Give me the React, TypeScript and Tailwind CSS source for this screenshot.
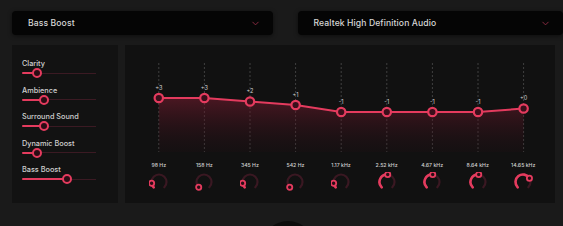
import { ChevronDown } from 'lucide-react';

const PINK = '#e43b5e';

const sliders = [
  { label: 'Clarity', value: 0.2 },
  { label: 'Ambience', value: 0.3 },
  { label: 'Surround Sound', value: 0.3 },
  { label: 'Dynamic Boost', value: 0.2 },
  { label: 'Bass Boost', value: 0.61 },
];

const bands = [
  { freq: '98 Hz', gain: 3, knob: 0.13 },
  { freq: '158 Hz', gain: 3, knob: 0 },
  { freq: '345 Hz', gain: 2, knob: 0.13 },
  { freq: '542 Hz', gain: 1, knob: 0 },
  { freq: '1.17 kHz', gain: -1, knob: 0.13 },
  { freq: '2.52 kHz', gain: -1, knob: 0.52 },
  { freq: '4.67 kHz', gain: -1, knob: 0.52 },
  { freq: '8.64 kHz', gain: -1, knob: 0.52 },
  { freq: '14.65 kHz', gain: 0, knob: 0.72 },
];

const COL = 45.6;
const gainY = (g: number) => 63.5 - g * 3.5;
const fmt = (g: number) => (g < 0 ? `${g}` : `+${g}`);

function polar(cx: number, cy: number, r: number, deg: number) {
  const a = (deg * Math.PI) / 180;
  return [cx + r * Math.sin(a), cy - r * Math.cos(a)];
}

function arc(cx: number, cy: number, r: number, from: number, to: number) {
  const [x1, y1] = polar(cx, cy, r, from);
  const [x2, y2] = polar(cx, cy, r, to);
  const large = to - from > 180 ? 1 : 0;
  return `M ${x1} ${y1} A ${r} ${r} 0 ${large} 1 ${x2} ${y2}`;
}

function Dropdown({ label, className }: { label: string; className: string }) {
  return (
    <div
      className={`h-[24px] rounded-[4px] bg-[#050505] flex items-center justify-between pl-[16px] pr-[12px] shadow-[0_1px_4px_rgba(0,0,0,0.5)] ${className}`}
    >
      <span className="text-[8.6px] font-medium text-[#d6d6d6] tracking-[0.1px]">{label}</span>
      <ChevronDown size={11} strokeWidth={2} color="#8f2c44" />
    </div>
  );
}

function Slider({ label, value }: { label: string; value: number }) {
  return (
    <div className="flex flex-col">
      <span className="h-[10px] leading-[10px] text-[7.3px] font-medium text-[#cfcfcf]">{label}</span>
      <div className="relative h-[8px] w-[74px]">
        <div className="absolute left-0 right-0 top-[3.5px] h-[1px] bg-[#3b1a23]" />
        <div
          className="absolute left-0 top-[3px] h-[2px] rounded-full"
          style={{ width: `${value * 74}px`, backgroundColor: PINK }}
        />
        <div
          className="absolute top-[-1px] h-[10px] w-[10px] rounded-full border-[2px] bg-[#2a0c14]"
          style={{ left: `${value * 74 - 5}px`, borderColor: PINK }}
        />
      </div>
    </div>
  );
}

function Knob({ value }: { value: number }) {
  const start = -135;
  const end = start + 270 * value;
  const [tx, ty] = polar(10, 10, 7.5, end);
  return (
    <svg width="20" height="20" viewBox="0 0 20 20">
      <path d={arc(10, 10, 7.5, start, 135)} fill="none" stroke="#3a1822" strokeWidth="2.2" strokeLinecap="round" />
      {value > 0 && (
        <path d={arc(10, 10, 7.5, start, end)} fill="none" stroke={PINK} strokeWidth="2.6" strokeLinecap="round" />
      )}
      <circle cx={tx} cy={ty} r="2.6" fill="#2a0c14" stroke={PINK} strokeWidth="1.8" />
    </svg>
  );
}

function Chart() {
  const pts = bands.map((b, i) => [COL / 2 + i * COL, gainY(b.gain)]);
  const line = pts.map(([x, y], i) => `${i ? 'L' : 'M'} ${x} ${y}`).join(' ');
  const area = `${line} L ${pts[pts.length - 1][0]} 107 L ${pts[0][0]} 107 Z`;
  return (
    <svg width="410" height="110" viewBox="0 0 410 110" className="block">
      <defs>
        <linearGradient id="eqfill" x1="0" y1="0" x2="0" y2="1">
          <stop offset="0" stopColor="#7a1c30" stopOpacity="0.55" />
          <stop offset="1" stopColor="#2a0d15" stopOpacity="0.15" />
        </linearGradient>
      </defs>
      {pts.map(([x], i) => (
        <line key={i} x1={x} y1="18" x2={x} y2="107" stroke="#4d4d4d" strokeWidth="0.8" strokeDasharray="2 2" />
      ))}
      <path d={area} fill="url(#eqfill)" />
      <path d={line} fill="none" stroke={PINK} strokeWidth="2" strokeLinejoin="round" />
      {pts.map(([x, y], i) => (
        <g key={i}>
          <circle cx={x} cy={y} r="4.2" fill="#3a0f1b" stroke={PINK} strokeWidth="2.2" />
          <text
            x={x}
            y={y - 8.5}
            textAnchor="middle"
            fontSize="5.6"
            fill="#d0d0d0"
            fontFamily="Inter, sans-serif"
          >
            {fmt(bands[i].gain)}
          </text>
        </g>
      ))}
    </svg>
  );
}

export default function App() {
  return (
    <div className="relative w-[563px] h-[226px] overflow-hidden bg-[#1a1a1a] font-['Inter','Noto_Sans',sans-serif]">
      <div className="flex pt-[11px] pl-[12px]">
        <Dropdown label="Bass Boost" className="w-[263px]" />
        <Dropdown label="Realtek High Definition Audio" className="ml-[25px] w-[268px]" />
      </div>

      <div className="flex mt-[10px] pl-[12px] gap-[7px]">
        <div className="w-[106px] h-[158px] bg-[#121212] pl-[10px] pt-[14px] flex flex-col gap-[8.6px]">
          {sliders.map((s) => (
            <Slider key={s.label} label={s.label} value={s.value} />
          ))}
        </div>

        <div className="w-[430px] h-[158px] bg-[#111111] pl-[11px]">
          <Chart />
          <div className="grid grid-cols-9 w-[410px] mt-[6px]">
            {bands.map((b) => (
              <div key={b.freq} className="flex flex-col items-center">
                <span className="h-[8px] leading-[8px] text-[5.2px] font-medium text-[#cfcfcf]">{b.freq}</span>
                <div className="mt-[3px]">
                  <Knob value={b.knob} />
                </div>
              </div>
            ))}
          </div>
        </div>
      </div>

      <div className="absolute left-[262px] top-[221px] w-[52px] h-[52px] rounded-full bg-[#0c0c0c]" />
    </div>
  );
}
